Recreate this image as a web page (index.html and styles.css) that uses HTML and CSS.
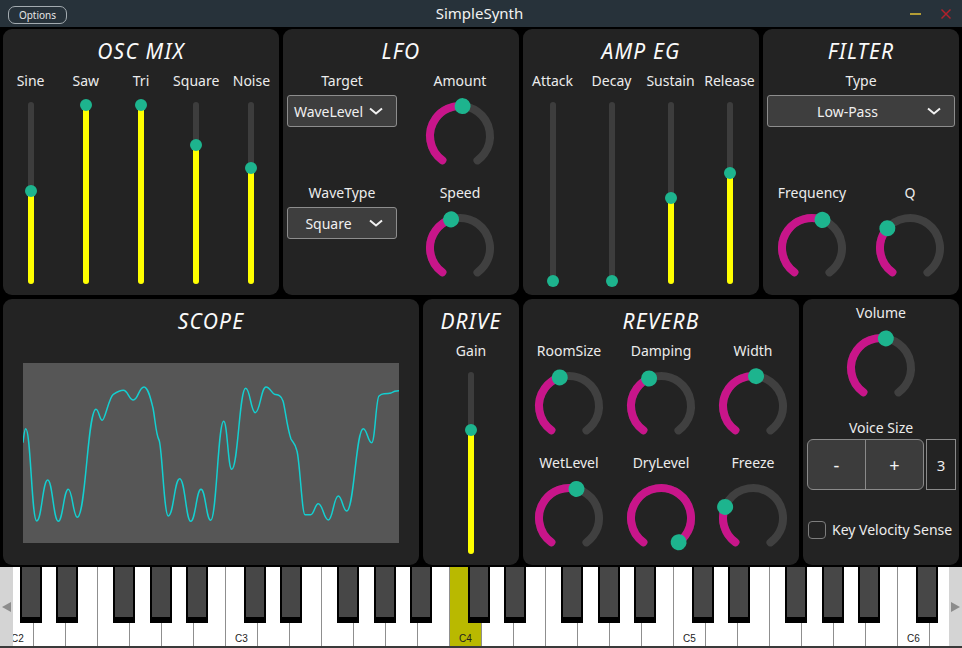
FILE: index.html
```html
<!DOCTYPE html>
<html lang="en">
<head>
<meta charset="utf-8">
<title>SimpleSynth</title>
<link rel="stylesheet" href="styles.css">
</head>
<body>
<header class="titlebar">
  <button class="options">Options</button>
  <div class="apptitle">SimpleSynth</div>
  <div class="winctl">
    <span class="min"></span>
    <svg class="close" viewBox="0 0 10 10"><line x1="0.5" y1="0.5" x2="9.5" y2="9.5"/><line x1="9.5" y1="0.5" x2="0.5" y2="9.5"/></svg>
  </div>
</header>

<main class="rack">
  <div class="row row1">
    <section class="panel">
      <h2>OSC MIX</h2>
      <div class="sliders">
        <div class="vslider" style="--v:0.513"><span class="lbl">Sine</span><div class="track"><div class="fill"></div><div class="thumb"></div></div></div>
        <div class="vslider" style="--v:1"><span class="lbl">Saw</span><div class="track"><div class="fill"></div><div class="thumb"></div></div></div>
        <div class="vslider" style="--v:1"><span class="lbl">Tri</span><div class="track"><div class="fill"></div><div class="thumb"></div></div></div>
        <div class="vslider" style="--v:0.77"><span class="lbl">Square</span><div class="track"><div class="fill"></div><div class="thumb"></div></div></div>
        <div class="vslider" style="--v:0.64"><span class="lbl">Noise</span><div class="track"><div class="fill"></div><div class="thumb"></div></div></div>
      </div>
    </section>

    <section class="panel">
      <h2>LFO</h2>
      <div class="cells cols2">
        <div class="cell">
          <span class="lbl">Target</span>
          <div class="combo"><span class="ctext">WaveLevel</span><svg viewBox="0 0 14 8"><polyline points="1,1.5 7,6.5 13,1.5"/></svg></div>
        </div>
        <div class="cell">
          <span class="lbl">Amount</span>
          <svg class="dial" viewBox="0 0 72 72"><circle class="k-trk" cx="36" cy="36" r="30" transform="rotate(126 36 36)"/><circle class="k-val" cx="36" cy="36" r="30" stroke-dasharray="77.96 400" transform="rotate(126 36 36)"/><circle class="k-th" cx="36" cy="6" r="8" transform="rotate(4.9 36 36)"/></svg>
        </div>
        <div class="cell">
          <span class="lbl">WaveType</span>
          <div class="combo"><span class="ctext">Square</span><svg viewBox="0 0 14 8"><polyline points="1,1.5 7,6.5 13,1.5"/></svg></div>
        </div>
        <div class="cell">
          <span class="lbl">Speed</span>
          <svg class="dial" viewBox="0 0 72 72"><circle class="k-trk" cx="36" cy="36" r="30" transform="rotate(126 36 36)"/><circle class="k-val" cx="36" cy="36" r="30" stroke-dasharray="66.35 400" transform="rotate(126 36 36)"/><circle class="k-th" cx="36" cy="6" r="8" transform="rotate(-17.3 36 36)"/></svg>
        </div>
      </div>
    </section>

    <section class="panel">
      <h2>AMP EG</h2>
      <div class="sliders">
        <div class="vslider" style="--v:0"><span class="lbl">Attack</span><div class="track"><div class="fill"></div><div class="thumb"></div></div></div>
        <div class="vslider" style="--v:0"><span class="lbl">Decay</span><div class="track"><div class="fill"></div><div class="thumb"></div></div></div>
        <div class="vslider" style="--v:0.47"><span class="lbl">Sustain</span><div class="track"><div class="fill"></div><div class="thumb"></div></div></div>
        <div class="vslider" style="--v:0.614"><span class="lbl">Release</span><div class="track"><div class="fill"></div><div class="thumb"></div></div></div>
      </div>
    </section>

    <section class="panel">
      <h2>FILTER</h2>
      <div class="cells cols2">
        <div class="cell span2">
          <span class="lbl">Type</span>
          <div class="combo wide"><span class="ctext">Low-Pass</span><svg viewBox="0 0 14 8"><polyline points="1,1.5 7,6.5 13,1.5"/></svg></div>
        </div>
        <div class="cell">
          <span class="lbl">Frequency</span>
          <svg class="dial" viewBox="0 0 72 72"><circle class="k-trk" cx="36" cy="36" r="30" transform="rotate(126 36 36)"/><circle class="k-val" cx="36" cy="36" r="30" stroke-dasharray="86.1 400" transform="rotate(126 36 36)"/><circle class="k-th" cx="36" cy="6" r="8" transform="rotate(20.4 36 36)"/></svg>
        </div>
        <div class="cell">
          <span class="lbl">Q</span>
          <svg class="dial" viewBox="0 0 72 72"><circle class="k-trk" cx="36" cy="36" r="30" transform="rotate(126 36 36)"/><circle class="k-val" cx="36" cy="36" r="30" stroke-dasharray="49.8 400" transform="rotate(126 36 36)"/><circle class="k-th" cx="36" cy="6" r="8" transform="rotate(-49 36 36)"/></svg>
        </div>
      </div>
    </section>
  </div>

  <div class="row row2">
    <section class="panel">
      <h2>SCOPE</h2>
      <div class="screen">
        <svg viewBox="0 0 376 180" width="376" height="180">
          <path class="wave" d="M0,79.7 C1,72 1.5,65.7 2.7,65.7 C7.7,65.7 8.7,158 13.7,158 C18.7,158 19.7,117 24.7,117 C29.5,117 30.5,158.3 35.3,158.3 C39.8,158.3 40.8,126.3 45.3,126.3 C49.3,126.3 50.3,154.3 54.3,154.3 C62.7,154.3 64.6,46.3 73,46.3 C75.8,46.3 76.5,57.3 79.3,57.3 C82,57.3 86,34 90.3,31.3 C94,29 97,27.3 100.3,27.3 C105,27.3 106,37 110.3,37 C115,37 116,24 121,24 C125,24 127.5,35 130,45 C132,55 133,72 136,77 C139,82 141,153 145.3,153 C150.5,153 151.5,115.7 156.7,115.7 C162,115.7 163,158.3 167.7,158.3 C172.5,158.3 173.4,126.3 178,126.3 C182.5,126.3 183.3,157.3 187.7,157.3 C193.5,157.3 195,58.3 200.7,58.3 C204.3,58.3 205.1,106.3 208.7,106.3 C215,106.3 216.4,25.3 222.7,25.3 C227,25.3 228,49.7 232.3,49.7 C237,49.7 238.2,24 243,24 C247,24 249,31 252,31.5 C255,32 258,32 260,38 C262,44 264,65 268,76 C270,80 272,79 274,88 C277,100 279,151.7 282,151.7 C285,151.7 286,151.7 287.7,151.7 C291,151.7 292,140.7 295.3,140.7 C299.8,140.7 300.8,157 305.3,157 C309.8,157 310.8,133 315.3,133 C319,133 320,148 323.7,148 C331,148 333,65.7 340.3,65.7 C344,65.7 345,79.7 348.7,79.7 C352,79.7 353,35 356,33 C358,31 359,30.7 361,30.7 C364,30.7 366,30.7 368,30 C371,28 373,27.7 376,27.7"/>
        </svg>
      </div>
    </section>

    <section class="panel">
      <h2>DRIVE</h2>
      <div class="sliders">
        <div class="vslider" style="--v:0.6875"><span class="lbl">Gain</span><div class="track"><div class="fill"></div><div class="thumb"></div></div></div>
      </div>
    </section>

    <section class="panel">
      <h2>REVERB</h2>
      <div class="cells cols3">
        <div class="cell">
          <span class="lbl">RoomSize</span>
          <svg class="dial" viewBox="0 0 72 72"><circle class="k-trk" cx="36" cy="36" r="30" transform="rotate(126 36 36)"/><circle class="k-val" cx="36" cy="36" r="30" stroke-dasharray="66.05 400" transform="rotate(126 36 36)"/><circle class="k-th" cx="36" cy="6" r="8" transform="rotate(-17.9 36 36)"/></svg>
        </div>
        <div class="cell">
          <span class="lbl">Damping</span>
          <svg class="dial" viewBox="0 0 72 72"><circle class="k-trk" cx="36" cy="36" r="30" transform="rotate(126 36 36)"/><circle class="k-val" cx="36" cy="36" r="30" stroke-dasharray="63.2 400" transform="rotate(126 36 36)"/><circle class="k-th" cx="36" cy="6" r="8" transform="rotate(-23.3 36 36)"/></svg>
        </div>
        <div class="cell">
          <span class="lbl">Width</span>
          <svg class="dial" viewBox="0 0 72 72"><circle class="k-trk" cx="36" cy="36" r="30" transform="rotate(126 36 36)"/><circle class="k-val" cx="36" cy="36" r="30" stroke-dasharray="78.4 400" transform="rotate(126 36 36)"/><circle class="k-th" cx="36" cy="6" r="8" transform="rotate(5.8 36 36)"/></svg>
        </div>
        <div class="cell">
          <span class="lbl">WetLevel</span>
          <svg class="dial" viewBox="0 0 72 72"><circle class="k-trk" cx="36" cy="36" r="30" transform="rotate(126 36 36)"/><circle class="k-val" cx="36" cy="36" r="30" stroke-dasharray="82.9 400" transform="rotate(126 36 36)"/><circle class="k-th" cx="36" cy="6" r="8" transform="rotate(14.4 36 36)"/></svg>
        </div>
        <div class="cell">
          <span class="lbl">DryLevel</span>
          <svg class="dial" viewBox="0 0 72 72"><circle class="k-trk" cx="36" cy="36" r="30" transform="rotate(126 36 36)"/><circle class="k-val" cx="36" cy="36" r="30" stroke-dasharray="150.8 400" transform="rotate(126 36 36)"/><circle class="k-th" cx="36" cy="6" r="8" transform="rotate(144 36 36)"/></svg>
        </div>
        <div class="cell">
          <span class="lbl">Freeze</span>
          <svg class="dial" viewBox="0 0 72 72"><circle class="k-trk" cx="36" cy="36" r="30" transform="rotate(126 36 36)"/><circle class="k-val" cx="36" cy="36" r="30" stroke-dasharray="39.7 400" transform="rotate(126 36 36)"/><circle class="k-th" cx="36" cy="6" r="8" transform="rotate(-68.3 36 36)"/></svg>
        </div>
      </div>
    </section>

    <section class="panel vol">
      <div class="cell">
        <span class="lbl">Volume</span>
        <svg class="dial" viewBox="0 0 72 72"><circle class="k-trk" cx="36" cy="36" r="30" transform="rotate(126 36 36)"/><circle class="k-val" cx="36" cy="36" r="30" stroke-dasharray="80.2 400" transform="rotate(126 36 36)"/><circle class="k-th" cx="36" cy="6" r="8" transform="rotate(9.2 36 36)"/></svg>
      </div>
      <span class="lbl vs">Voice Size</span>
      <div class="stepper">
        <div class="btns"><span>-</span><span>+</span></div>
        <div class="count">3</div>
      </div>
      <div class="check"><span class="box"></span><span class="lbl">Key Velocity Sense</span></div>
    </section>
  </div>
</main>

<div class="keyboard">
  <div class="octave">
    <div class="wk">C2</div><div class="wk"></div><div class="wk"></div><div class="wk"></div><div class="wk"></div><div class="wk"></div><div class="wk"></div>
    <span class="bk cs"></span><span class="bk ds"></span><span class="bk fs"></span><span class="bk gs"></span><span class="bk as"></span>
  </div>
  <div class="octave">
    <div class="wk">C3</div><div class="wk"></div><div class="wk"></div><div class="wk"></div><div class="wk"></div><div class="wk"></div><div class="wk"></div>
    <span class="bk cs"></span><span class="bk ds"></span><span class="bk fs"></span><span class="bk gs"></span><span class="bk as"></span>
  </div>
  <div class="octave">
    <div class="wk on">C4</div><div class="wk"></div><div class="wk"></div><div class="wk"></div><div class="wk"></div><div class="wk"></div><div class="wk"></div>
    <span class="bk cs"></span><span class="bk ds"></span><span class="bk fs"></span><span class="bk gs"></span><span class="bk as"></span>
  </div>
  <div class="octave">
    <div class="wk">C5</div><div class="wk"></div><div class="wk"></div><div class="wk"></div><div class="wk"></div><div class="wk"></div><div class="wk"></div>
    <span class="bk cs"></span><span class="bk ds"></span><span class="bk fs"></span><span class="bk gs"></span><span class="bk as"></span>
  </div>
  <div class="octave">
    <div class="wk">C6</div><div class="wk"></div><div class="wk"></div><div class="wk"></div><div class="wk"></div><div class="wk"></div><div class="wk"></div>
    <span class="bk cs"></span><span class="bk ds"></span><span class="bk fs"></span><span class="bk gs"></span><span class="bk as"></span>
  </div>
  <div class="kb-arrow left"><svg viewBox="0 0 9 10"><polygon points="9,0 9,10 0,5"/></svg></div>
  <div class="kb-arrow right"><svg viewBox="0 0 9 10"><polygon points="0,0 0,10 9,5"/></svg></div>
</div>
</body>
</html>
```
FILE: styles.css
```css
* { box-sizing: border-box; }
html, body { margin: 0; padding: 0; }
body {
  width: 962px;
  height: 648px;
  overflow: hidden;
  background: #000;
  font-family: "Noto Sans", "Open Sans", sans-serif;
  color: #ececec;
}

/* title bar */
.titlebar {
  height: 27px;
  background: #27323a;
  display: grid;
  grid-template-columns: 1fr auto 1fr;
  align-items: center;
  padding: 0 11px 0 8px;
}
.options {
  justify-self: start;
  align-self: start;
  margin-top: 6px;
  width: 59px;
  height: 18px;
  padding: 0;
  border: 1px solid #a3abb0;
  border-radius: 7px;
  background: #27323a;
  color: #e6e6e6;
  font-family: "Noto Sans", sans-serif;
  font-size: 10px;
  line-height: 15px;
}
.apptitle {
  font-size: 15px;
  line-height: 27px;
  color: #f2f2f2;
}
.winctl {
  justify-self: end;
  display: flex;
  align-items: center;
  gap: 20px;
}
.min {
  width: 11px;
  height: 2px;
  margin-top: 1px;
  background: #b39d35;
}
.close {
  width: 10px;
  height: 10px;
  stroke: #b1202b;
  stroke-width: 1.4;
}

/* rack */
.rack {
  height: 540px;
  padding: 2px 3px;
  display: flex;
  flex-direction: column;
  gap: 4px;
}
.row {
  display: grid;
  gap: 4px;
  height: 266px;
}
.row1 { grid-template-columns: 276px 236px 236px 196px; }
.row2 { grid-template-columns: 416px 96px 276px 156px; }

.panel {
  background: #232323;
  border-radius: 9px;
  padding-top: 8px;
  display: flex;
  flex-direction: column;
}
.panel h2 {
  margin: 0;
  font-size: 21px;
  font-style: italic;
  font-weight: 400;
  letter-spacing: 1.2px;
  line-height: 28px;
  text-align: center;
  color: #fafafa;
}
.lbl {
  font-size: 14px;
  line-height: 20px;
  white-space: nowrap;
  text-align: center;
  color: #ececec;
}

/* vertical sliders */
.sliders {
  display: flex;
  margin-top: 6px;
}
.vslider {
  flex: 1;
  display: flex;
  flex-direction: column;
  align-items: center;
}
.track {
  position: relative;
  width: 6px;
  height: 182px;
  margin-top: 11px;
  border-radius: 3px;
  background: #3d3d3d;
}
.fill {
  position: absolute;
  left: 0;
  right: 0;
  bottom: 0;
  height: calc(3px + var(--v) * 176px);
  border-radius: 3px;
  background: #ffff00;
}
.thumb {
  position: absolute;
  left: -3px;
  top: calc(3px + (1 - var(--v)) * 176px - 6px);
  width: 12px;
  height: 12px;
  border-radius: 50%;
  background: #1db48e;
}

/* knob cells */
.cells {
  display: grid;
  grid-auto-rows: 112px;
  margin-top: 6px;
}
.cols2 { grid-template-columns: 1fr 1fr; }
.cols3 { grid-template-columns: 1fr 1fr 1fr; }
.cell {
  display: flex;
  flex-direction: column;
  align-items: center;
}
.span2 { grid-column: 1 / -1; }
.dial {
  width: 72px;
  height: 72px;
  margin-top: 9px;
  overflow: visible;
}
.k-trk {
  fill: none;
  stroke: #404040;
  stroke-width: 8;
  stroke-linecap: round;
  stroke-dasharray: 150.8 400;
}
.k-val {
  fill: none;
  stroke: #c8158a;
  stroke-width: 8;
  stroke-linecap: round;
}
.k-th { fill: #1db48e; }

/* combo boxes */
.combo {
  margin-top: 4px;
  width: 110px;
  height: 32px;
  border: 1px solid #8d8d8d;
  border-radius: 3px;
  background: #3e3e3e;
  display: flex;
  align-items: center;
}
.combo.wide { width: 188px; }
.ctext {
  flex: 1;
  text-align: center;
  font-size: 14px;
  color: #f0f0f0;
}
.combo svg {
  width: 14px;
  height: 8px;
  margin-right: 13px;
  fill: none;
  stroke: #f0f0f0;
  stroke-width: 2;
}

/* scope */
.screen {
  margin: 28px 20px 0;
  height: 180px;
  background: #565656;
}
.screen svg { display: block; }
.wave {
  fill: none;
  stroke: #14cfd0;
  stroke-width: 1.5;
}

/* volume panel */
.vol {
  padding-top: 4px;
  align-items: center;
}
.vs { margin-top: 14px; }
.stepper {
  align-self: stretch;
  display: flex;
  gap: 2px;
  height: 51px;
  margin: 1px 3px 0 4px;
}
.btns {
  width: 117px;
  display: flex;
  border: 1px solid #8a8a8a;
  border-radius: 6px;
  background: #3c3c3c;
  overflow: hidden;
}
.btns span {
  flex: 1;
  display: flex;
  align-items: center;
  justify-content: center;
  font-size: 18px;
  color: #f4f4f4;
}
.btns span + span { border-left: 1px solid #8a8a8a; }
.count {
  flex: 1;
  border: 1px solid #8a8a8a;
  display: flex;
  align-items: center;
  justify-content: center;
  font-size: 15px;
}
.check {
  align-self: stretch;
  display: flex;
  align-items: center;
  margin: 30px 0 0 5px;
}
.box {
  width: 18px;
  height: 18px;
  border: 1px solid #7d7d7d;
  border-radius: 4px;
}
.check .lbl { margin-left: 6px; }

/* keyboard */
.keyboard {
  position: relative;
  height: 81px;
  background: #3a3a3a;
  overflow: hidden;
  display: flex;
  padding-left: 2px;
}
.octave {
  position: relative;
  flex: 0 0 224px;
  height: 79px;
  display: flex;
}
.wk {
  flex: 0 0 32px;
  background: #fff;
  border-right: 1px solid #8f8f8f;
  display: flex;
  align-items: flex-end;
  justify-content: center;
  padding-bottom: 1px;
  font-family: "Liberation Sans", sans-serif;
  font-size: 10px;
  line-height: 12px;
  color: #222;
}
.wk.on { background: #b9b900; }
.bk {
  position: absolute;
  top: 0;
  width: 22px;
  height: 56px;
  background: #474747;
  border: 2px solid #000;
  border-top: 0;
  border-bottom-width: 6px;
}
.cs { left: 18px; }
.ds { left: 54px; }
.fs { left: 111px; }
.gs { left: 148px; }
.as { left: 184px; }
.kb-arrow {
  position: absolute;
  top: 0;
  height: 79px;
  width: 13px;
  background: #d4d4d4;
  display: flex;
  align-items: center;
  justify-content: center;
}
.kb-arrow.left { left: 0; }
.kb-arrow.right { right: 0; }
.kb-arrow svg {
  width: 9px;
  height: 10px;
  fill: #8c8c8c;
}
```
